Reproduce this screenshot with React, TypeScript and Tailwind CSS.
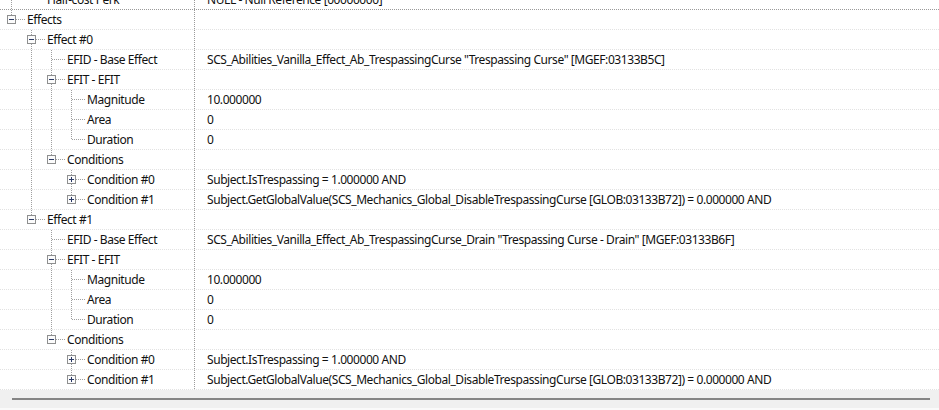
type Row = {
  level: number;
  label: string;
  value?: string;
  box?: "minus" | "plus";
  last?: boolean;
  guides: number[]; // ancestor levels that still draw a full vertical line
  textX?: number;
  topOnly?: boolean;
};

const effectRows = (n: number, efid: string, lastEffect: boolean): Row[] => {
  const g1 = lastEffect ? [] : [1];
  return [
    { level: 1, label: `Effect #${n}`, box: "minus", last: lastEffect, guides: [] },
    { level: 2, label: "EFID - Base Effect", value: efid, guides: g1 },
    { level: 2, label: "EFIT - EFIT", box: "minus", guides: g1 },
    { level: 3, label: "Magnitude", value: "10.000000", guides: [...g1, 2] },
    { level: 3, label: "Area", value: "0", guides: [...g1, 2] },
    { level: 3, label: "Duration", value: "0", last: true, guides: [...g1, 2] },
    { level: 2, label: "Conditions", box: "minus", last: true, guides: g1 },
    {
      level: 3,
      label: "Condition #0",
      value: "Subject.IsTrespassing = 1.000000 AND",
      box: "plus",
      guides: g1,
    },
    {
      level: 3,
      label: "Condition #1",
      value:
        "Subject.GetGlobalValue(SCS_Mechanics_Global_DisableTrespassingCurse [GLOB:03133B72]) = 0.000000 AND",
      box: "plus",
      last: true,
      guides: g1,
    },
  ];
};

const rows: Row[] = [
  { level: 0, label: "Effects", box: "minus", last: true, guides: [] },
  ...effectRows(
    0,
    'SCS_Abilities_Vanilla_Effect_Ab_TrespassingCurse "Trespassing Curse" [MGEF:03133B5C]',
    false
  ),
  ...effectRows(
    1,
    'SCS_Abilities_Vanilla_Effect_Ab_TrespassingCurse_Drain "Trespassing Curse - Drain" [MGEF:03133B6F]',
    true
  ),
];

const DOT = "#a0a0a0";

function TreeLines({ row, width }: { row: Row; width: number }) {
  const x = 11 + 20 * row.level;
  const cx = x + 0.5;
  return (
    <svg width={width} height={19} className="shrink-0" shapeRendering="crispEdges">
      {row.guides.map((l) => (
        <line
          key={l}
          x1={11 + 20 * l + 0.5}
          x2={11 + 20 * l + 0.5}
          y1={0}
          y2={19}
          stroke={DOT}
          strokeDasharray="1 1"
        />
      ))}
      {!row.topOnly && (
        <>
          <line x1={cx} x2={cx} y1={0} y2={row.last ? 9.5 : 19} stroke={DOT} strokeDasharray="1 1" />
          <line x1={x + 1} x2={width - 2} y1={9.5} y2={9.5} stroke={DOT} strokeDasharray="1 1" />
        </>
      )}
      {row.topOnly && (
        <line x1={11.5} x2={11.5} y1={0} y2={19} stroke={DOT} strokeDasharray="1 1" />
      )}
      {row.box && (
        <g>
          <rect x={x - 3.5} y={5.5} width={8} height={8} fill="#fbfbfb" stroke="#8e8f8f" />
          <rect x={x - 2} y={9} width={5} height={1} fill="#2b3a67" />
          {row.box === "plus" && <rect x={x} y={7} width={1} height={5} fill="#2b3a67" />}
        </g>
      )}
    </svg>
  );
}

function TreeRow({ row, first }: { row: Row; first?: boolean }) {
  const textX = row.textX ?? 27 + 20 * row.level;
  return (
    <div
      className={`flex h-[20px] border-b border-dotted ${
        first ? "border-[#9a9a9a]" : "border-[#e2e2e2]"
      }`}
    >
      <div className="flex w-[195px] shrink-0 items-center overflow-hidden border-r border-dotted border-[#9a9a9a]">
        <TreeLines row={row} width={textX} />
        <span className="whitespace-nowrap">{row.label}</span>
      </div>
      <div className="flex items-center whitespace-nowrap pl-[12px]">{row.value ?? ""}</div>
    </div>
  );
}

export default function App() {
  return (
    <div
      className="flex h-[410px] w-[939px] flex-col overflow-hidden bg-white text-[12px] tracking-[-0.43px] text-[#111]"
      style={{ fontFamily: '"Noto Sans", "Open Sans", sans-serif' }}
    >
      <div className="-mt-[10px] flex flex-col">
        <TreeRow
          first
          row={{
            level: 0,
            label: "Half-cost Perk",
            value: "NULL - Null Reference [00000000]",
            guides: [],
            textX: 47,
            topOnly: true,
          }}
        />
        {rows.map((r, i) => (
          <TreeRow key={i} row={r} />
        ))}
      </div>
      {/* horizontal scrollbar */}
      <div className="h-[18px] bg-[#f0f0f0] pt-[8px]">
        <div className="ml-[12px] mr-[9px] h-[2px] bg-[#858585]" />
      </div>
      <div className="flex-1 bg-[#fafafa]" />
    </div>
  );
}
